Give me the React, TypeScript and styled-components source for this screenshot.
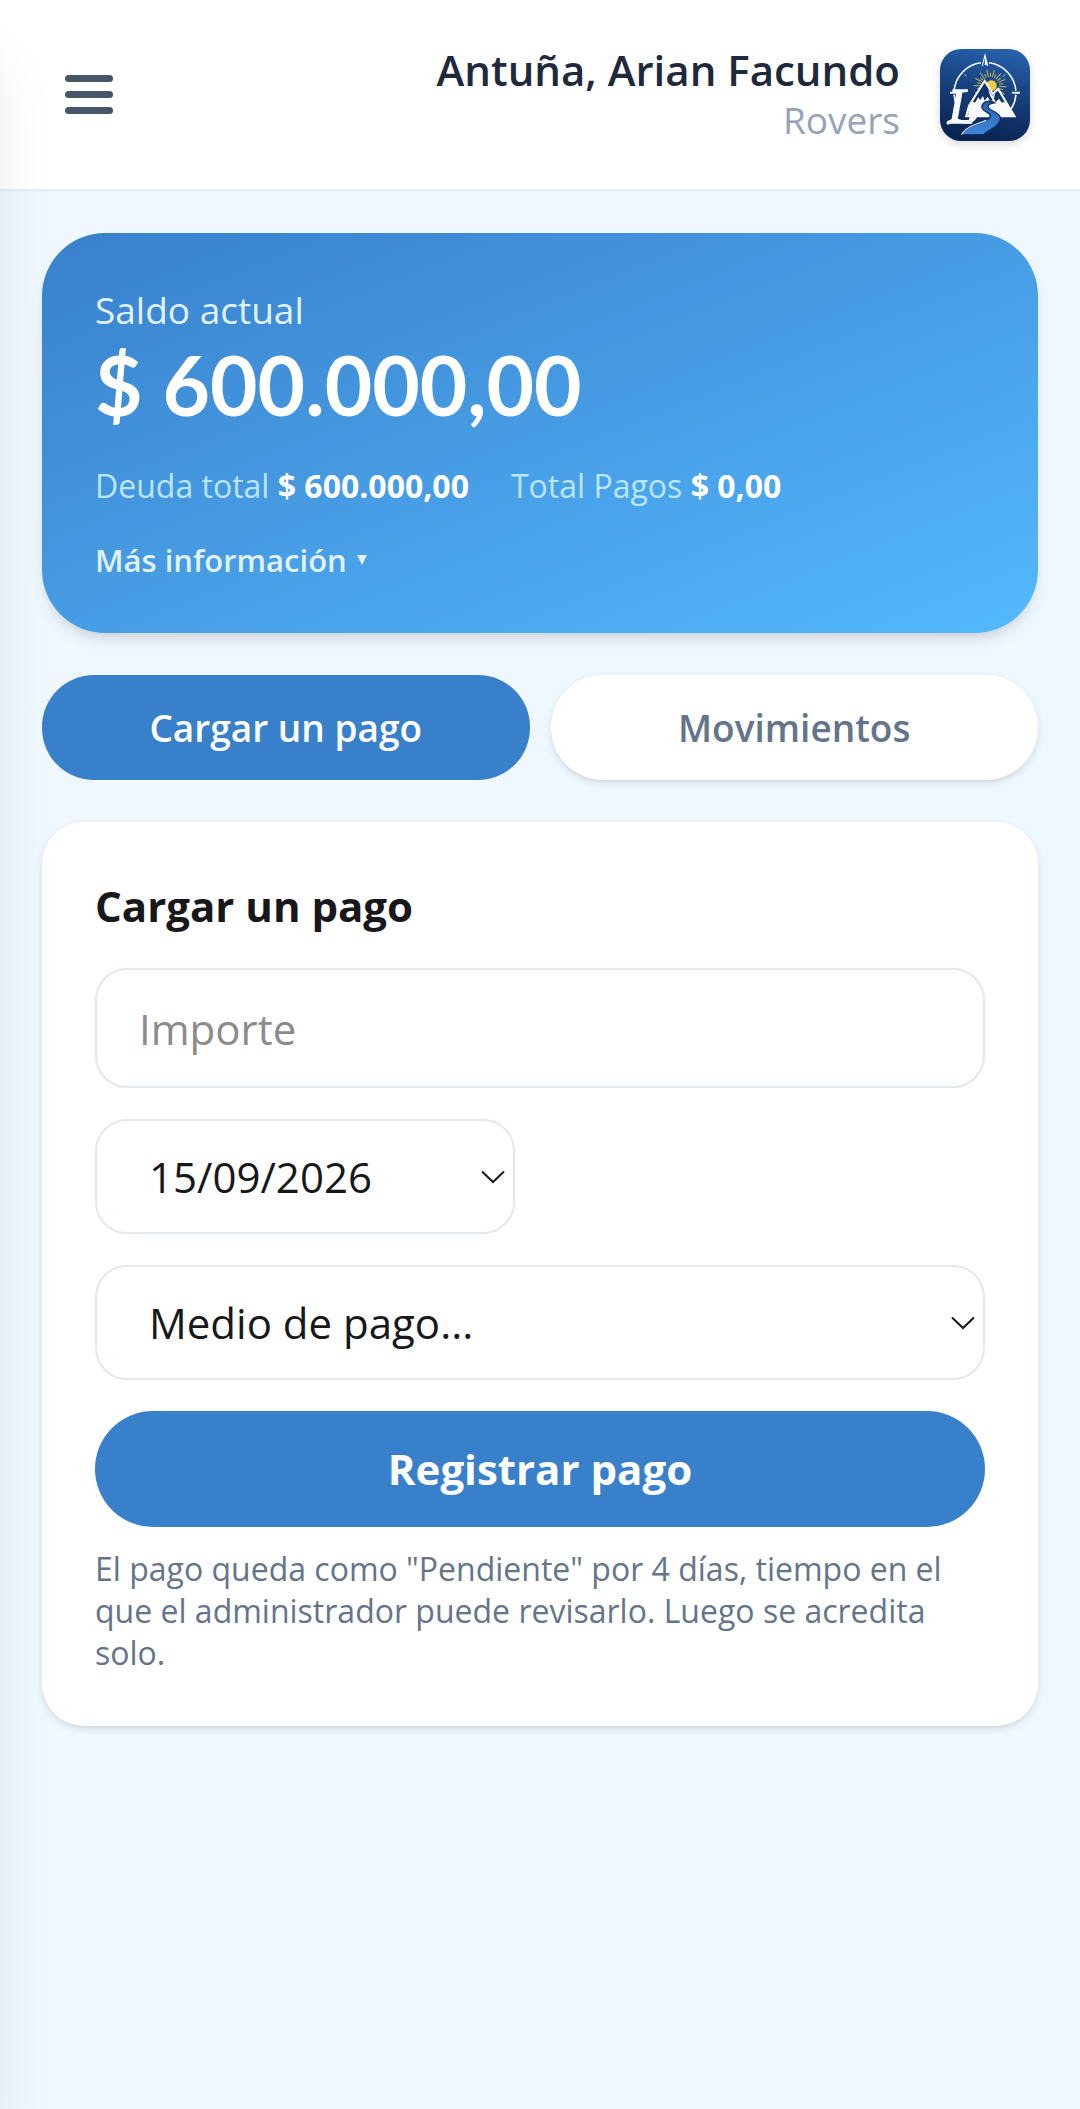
import * as React from "react";
import styled, { createGlobalStyle, css } from "styled-components";

const GlobalStyle = createGlobalStyle`
  * {
    box-sizing: border-box;
  }
  body {
    margin: 0;
    background-color: #f0f8ff;
    color: #18181b;
    font-family: "Open Sans", sans-serif;
    font-size: 42px;
  }
  button,
  input,
  select {
    font-family: inherit;
    color: inherit;
    margin: 0;
  }
  h1,
  h2,
  p {
    margin: 0;
  }
`;

const PageWrapper = styled.div`
  min-height: 100vh;
  overflow: hidden;
`;

const Drawer = styled.aside`
  position: fixed;
  top: 0;
  bottom: 0;
  left: 0;
  z-index: 10;
  width: 672px;
  background-color: white;
  transform: translateX(-100%);
  box-shadow: 0 53px 66px -13px rgba(0, 0, 0, 0.1),
    0 21px 26px -16px rgba(0, 0, 0, 0.1);
`;

const Header = styled.header`
  display: flex;
  justify-content: space-between;
  align-items: center;
  height: 191px;
  padding: 0 50px 0 44px;
  background-color: white;
  border-bottom: 2px solid #e3edf6;
`;

const MenuButton = styled.button`
  display: flex;
  flex-direction: column;
  gap: 9px;
  padding: 21px;
  border: none;
  background: none;
  cursor: pointer;

  span {
    width: 48px;
    height: 7px;
    border-radius: 4px;
    background-color: #475569;
  }
`;

const UserBox = styled.div`
  display: flex;
  align-items: center;
  gap: 40px;
  text-align: right;

  svg {
    display: block;
    border-radius: 21px;
    box-shadow: 0 3px 8px rgba(0, 0, 0, 0.15);
  }
`;

const UserName = styled.div`
  font-size: 42px;
  font-weight: 600;
  line-height: 50px;
  color: #1e293b;
`;

const UserGroup = styled.div`
  font-size: 37px;
  line-height: 50px;
  color: #94a3b8;
`;

const Main = styled.main`
  display: flex;
  flex-direction: column;
  gap: 42px;
  padding: 42px;
`;

const BalanceCard = styled.section`
  padding: 52px 53px;
  border-radius: 63px;
  color: white;
  background: linear-gradient(to bottom right, #3980cb, #54b9fd);
  box-shadow: 0 10px 16px -3px rgba(0, 0, 0, 0.1),
    0 5px 10px -5px rgba(0, 0, 0, 0.1);

  .label {
    font-size: 37px;
    line-height: 50px;
    color: #e0f2fe;
  }
  .amount {
    font-family: Lato, sans-serif;
    font-size: 82px;
    font-weight: 700;
    line-height: 98px;
  }
`;

const Totals = styled.div`
  display: flex;
  flex-wrap: wrap;
  gap: 42px;
  margin: 32px 0;
  font-size: 32px;
  line-height: 42px;
  color: #bae6fd;

  strong {
    color: white;
  }
`;

const MoreButton = styled.button`
  display: flex;
  align-items: center;
  gap: 10px;
  padding: 0;
  border: none;
  background: none;
  font-size: 31px;
  font-weight: 600;
  line-height: 42px;
  color: #e0f2fe;
  cursor: pointer;
`;

const Tabs = styled.div`
  display: grid;
  grid-template-columns: 1fr 1fr;
  gap: 21px;
`;

const Tab = styled.button<{ $active?: boolean }>`
  padding: 26px;
  border: none;
  border-radius: 52px;
  font-size: 37px;
  font-weight: 600;
  line-height: 53px;
  cursor: pointer;
  ${(props) =>
    props.$active
      ? css`
          color: white;
          background-color: #3980cb;
        `
      : css`
          color: #64748b;
          background-color: white;
          box-shadow: 0 3px 8px rgba(0, 0, 0, 0.1),
            0 3px 5px -3px rgba(0, 0, 0, 0.1);
        `}
`;

const FormCard = styled.form`
  display: flex;
  flex-direction: column;
  gap: 31px;
  padding: 52px 53px;
  border-radius: 42px;
  background-color: white;
  box-shadow: 0 3px 8px rgba(0, 0, 0, 0.1), 0 3px 5px -3px rgba(0, 0, 0, 0.1);
`;

const FormTitle = styled.h2`
  font-size: 42px;
  font-weight: 700;
  line-height: 63px;
`;

const fieldStyle = css`
  width: 100%;
  border: 2px solid #e2e8ee;
  border-radius: 32px;
  background-color: white;
  font-size: 42px;
`;

const TextField = styled.input`
  ${fieldStyle}
  height: 120px;
  padding: 0 42px;

  &::placeholder {
    color: #8b8b8b;
    opacity: 1;
  }
`;

const SelectWrapper = styled.div<{ $short?: boolean }>`
  display: grid;
  align-items: center;
  width: ${(props) => (props.$short ? "420px" : "100%")};
  max-width: 100%;

  select,
  svg {
    grid-area: 1 / 1;
  }
  select {
    ${fieldStyle}
    height: 115px;
    padding: 0 52px;
    appearance: none;
  }
  svg {
    justify-self: end;
    margin-right: 10px;
    pointer-events: none;
  }
`;

const SubmitBlock = styled.div`
  display: flex;
  flex-direction: column;
  gap: 21px;
`;

const SubmitButton = styled.button`
  padding: 26px;
  border: none;
  border-radius: 58px;
  background-color: #3980cb;
  font-size: 42px;
  font-weight: 700;
  line-height: 64px;
  color: white;
  cursor: pointer;
`;

const HelpText = styled.p`
  font-size: 32px;
  line-height: 42px;
  color: #64748b;
`;

function Chevron() {
  return (
    <svg width="24" height="14" viewBox="0 0 24 14" fill="none" aria-hidden>
      <path d="M1 1.5 12 12 23 1.5" stroke="#18181b" strokeWidth="2" />
    </svg>
  );
}

const sunRays = Array.from({ length: 19 }, (_, i) => -205 + i * 13);

function Logo() {
  return (
    <svg
      width="90"
      height="92"
      viewBox="62 56 268 274"
      role="img"
      aria-label="Logo"
    >
      <defs>
        <linearGradient id="logo-bg" x1="0.6" y1="0" x2="0.4" y2="1">
          <stop offset="0" stopColor="#2560a8" />
          <stop offset="0.5" stopColor="#153d78" />
          <stop offset="1" stopColor="#0a2350" />
        </linearGradient>
        <linearGradient id="logo-river" x1="0" y1="0" x2="0" y2="1">
          <stop offset="0" stopColor="#2a62b0" />
          <stop offset="1" stopColor="#3f86dc" />
        </linearGradient>
      </defs>
      <rect x="62" y="56" width="268" height="274" fill="url(#logo-bg)" />
      {/* compass */}
      <g fill="none" stroke="#f1f5f9" strokeWidth="5">
        <path d="M104 180A92 92 0 0 1 184 97" />
        <path d="M208 97A92 92 0 0 1 288 180" />
        <path d="M288 192A92 92 0 0 1 274 234" />
        <path d="M104 192A92 92 0 0 0 112 224" />
        <path d="M92 186h24M276 186h24" strokeWidth="6" />
        <path d="m134 130 7 8M256 132l-7 7" strokeWidth="2" />
      </g>
      <path d="M196 68 206 107 196 103 186 107z" fill="#f8fafc" />
      <path d="M196 82v20l-7 3z" fill="#2c6ab8" />
      {/* sun */}
      <g stroke="#c4b95c" strokeWidth="3">
        {sunRays.map((angle, i) => (
          <path
            key={angle}
            d={i % 2 ? "M27 0h12" : "M27 0h22"}
            transform={`translate(211 166) rotate(${angle})`}
          />
        ))}
      </g>
      <circle cx="215" cy="165" r="16" fill="#fbcb45" />
      {/* mountains */}
      <path
        d="M148 226 195 151 219 190 235 175 284 256H140z"
        fill="#123469"
        stroke="#f8fafc"
        strokeWidth="6"
        strokeLinejoin="miter"
      />
      <path
        d="M146 236 158 212 166 216 176 200 182 208 190 196 195 210 204 198 212 212 222 202 228 214 238 204 246 216 258 212 286 257H146z"
        fill="#f8fafc"
      />
      <path d="m205 176 14 20 8-8-6 20-8-8z" fill="#f8fafc" />
      {/* river */}
      <path
        d="M214 211C184 212 178 232 200 243C216 251 216 260 200 268C178 278 142 284 126 311H192C206 296 243 286 242 262C241 243 207 240 205 228C205 220 214 217 224 216z"
        fill="url(#logo-river)"
        stroke="#0f2f63"
        strokeWidth="4"
      />
      <path
        d="M126 311C142 284 178 278 200 268"
        fill="none"
        stroke="#f1f5f9"
        strokeWidth="3"
      />
      <path
        d="M86 277C108 254 130 280 148 274C168 268 178 244 168 236C160 232 154 240 160 246"
        fill="none"
        stroke="#f8fafc"
        strokeWidth="8"
        strokeLinecap="round"
      />
      <text
        x="86"
        y="276"
        fontFamily="Liberation Serif, serif"
        fontSize="150"
        fontStyle="italic"
        fill="#f8fafc"
        stroke="#f8fafc"
        strokeWidth="4"
      >
        L
      </text>
    </svg>
  );
}

export default function App() {
  const [tab, setTab] = React.useState("pago");

  return (
    <PageWrapper>
      <GlobalStyle />
      <Drawer aria-hidden />
      <Header>
        <MenuButton aria-label="Abrir menú">
          <span />
          <span />
          <span />
        </MenuButton>
        <UserBox>
          <div>
            <UserName>Antuña, Arian Facundo</UserName>
            <UserGroup>Rovers</UserGroup>
          </div>
          <Logo />
        </UserBox>
      </Header>
      <Main>
        <BalanceCard>
          <div className="label">Saldo actual</div>
          <div className="amount">$ 600.000,00</div>
          <Totals>
            <span>
              Deuda total <strong>$ 600.000,00</strong>
            </span>
            <span>
              Total Pagos <strong>$ 0,00</strong>
            </span>
          </Totals>
          <MoreButton type="button">
            Más información
            <svg width="10" height="10" viewBox="0 0 10 10" aria-hidden>
              <path d="M0 0h10L5 10z" fill="currentColor" />
            </svg>
          </MoreButton>
        </BalanceCard>
        <Tabs>
          <Tab $active={tab === "pago"} onClick={() => setTab("pago")}>
            Cargar un pago
          </Tab>
          <Tab
            $active={tab === "movimientos"}
            onClick={() => setTab("movimientos")}
          >
            Movimientos
          </Tab>
        </Tabs>
        <FormCard onSubmit={(e) => e.preventDefault()}>
          <FormTitle>Cargar un pago</FormTitle>
          <TextField
            type="text"
            inputMode="decimal"
            placeholder="Importe"
            aria-label="Importe"
          />
          <SelectWrapper $short>
            <select aria-label="Fecha">
              <option>15/09/2026</option>
            </select>
            <Chevron />
          </SelectWrapper>
          <SelectWrapper>
            <select aria-label="Medio de pago">
              <option>Medio de pago...</option>
            </select>
            <Chevron />
          </SelectWrapper>
          <SubmitBlock>
            <SubmitButton type="submit">Registrar pago</SubmitButton>
            <HelpText>
              El pago queda como "Pendiente" por 4 días, tiempo en el que el
              administrador puede revisarlo. Luego se acredita solo.
            </HelpText>
          </SubmitBlock>
        </FormCard>
      </Main>
    </PageWrapper>
  );
}
